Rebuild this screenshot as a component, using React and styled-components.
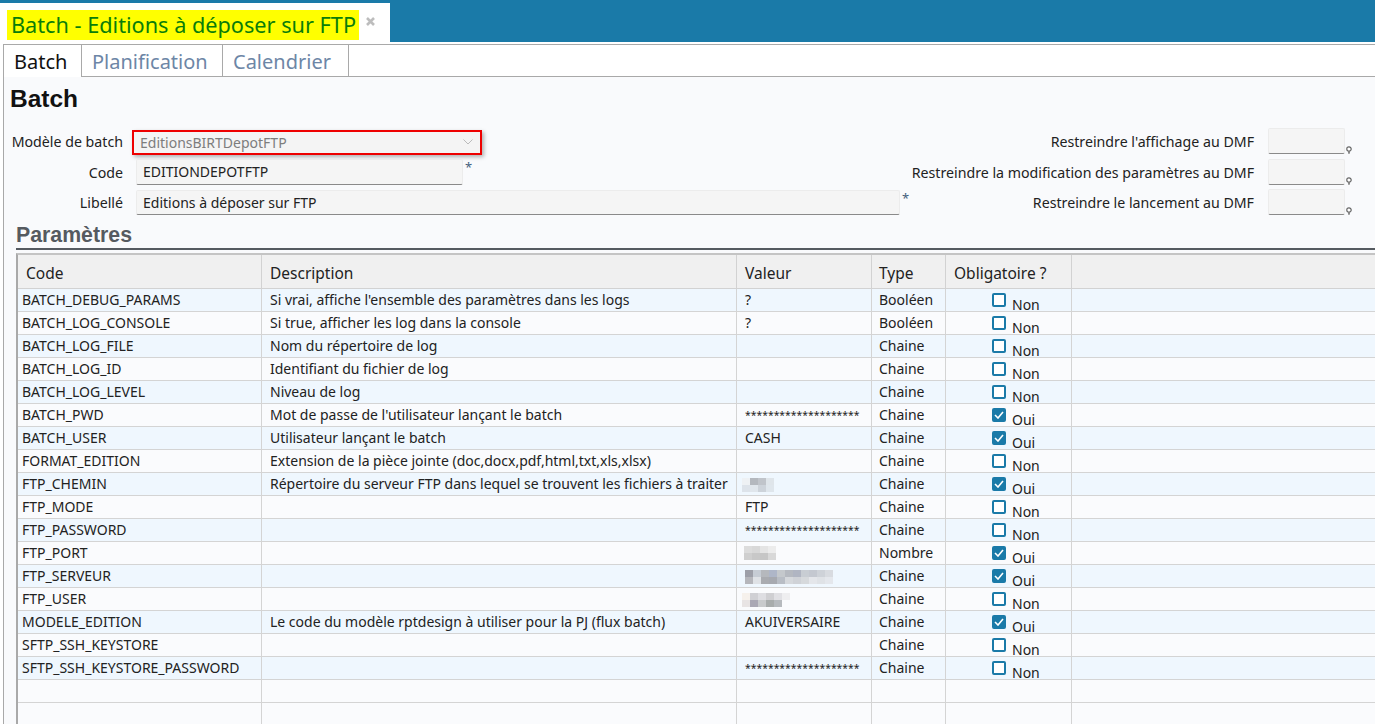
import React from "react";
import styled, { createGlobalStyle } from "styled-components";

const Global = createGlobalStyle`
  html, body { margin: 0; padding: 0; background: #fff; }
  body { font-family: "Noto Sans", "Open Sans", sans-serif; color: #222; }
  * { box-sizing: border-box; }
`;

const Page = styled.div`
  width: 1375px; height: 724px; overflow: hidden; display: flex; flex-direction: column; background: #fff;
`;
const TopBar = styled.div`
  height: 42px; flex: none; background: #1a7aa8; padding-top: 3px; display: flex;
`;
const MainTab = styled.div`
  width: 390px; background: #fff; display: flex; align-items: flex-start; padding: 7px 0 0 7px; gap: 7px;
`;
const MainTitle = styled.span`
  background: #ffff00; color: #0a7d0a; font-size: 21.7px; line-height: 30px; height: 30px; width: 352px; padding-left: 4px; white-space: nowrap;
`;
const Close = styled.svg`
  width: 9px; height: 9px; margin-top: 7px; flex: none;
`;
const Shell = styled.div`
  flex: 1; min-height: 0; margin: 2px 0 0 3px; border-left: 1px solid #a9a9a9; border-top: 1px solid #a9a9a9; display: flex; flex-direction: column;
`;
const TabRow = styled.div`
  display: flex; height: 32px; flex: none; border-bottom: 1px solid #a9a9a9; background: #fff;
`;
const SubTab = styled.div`
  height: ${p => (p.$active ? "32px" : "31px")};
  width: ${p => p.$w}px; padding-left: ${p => p.$pad}px; border-right: 1px solid #a9a9a9; background: #fff;
  color: ${p => (p.$active ? "#111" : "#6d86a6")}; font-size: 20px; line-height: 34px; white-space: nowrap;
`;
const Body = styled.div`
  flex: 1; min-height: 0; background: #f9fafc; padding: 7px 0 0 6px; display: flex; flex-direction: column;
`;
const Heading = styled.h1`
  margin: 0; font: 700 24.5px/30px "Liberation Sans", sans-serif; color: #111;
`;
const Form = styled.div`
  display: flex; justify-content: space-between; margin-top: 14px; height: 87px;
`;
const FormColumn = styled.div`
  display: flex; flex-direction: column; gap: 5px;
`;
const FormRow = styled.div`
  display: flex; align-items: center; justify-content: ${p => (p.$end ? "flex-end" : "flex-start")};
  height: ${p => p.$h || 26}px; margin-top: ${p => p.$mt || 0}px;
`;
const Label = styled.label`
  width: ${p => (p.$w ? `${p.$w}px` : "auto")}; flex: none; text-align: right; font-size: 14.2px; color: #222; white-space: nowrap;
`;
const Select = styled.div`
  width: 350px; height: 25px; margin: 2px 0 0 9px; border: 2px solid #ee0000; background: #f4f4f4; box-shadow: 2px 2px 4px rgba(0,0,0,.3);
  display: flex; align-items: center; justify-content: space-between; padding: 0 7px 0 6px; color: #7d7d7d; font-size: 14px;
`;
const TextInput = styled.div`
  width: ${p => p.$w}px; height: 100%; margin-left: ${p => p.$ml || 13}px; background: #f5f5f5; border: 1px solid #ececec; border-bottom: 1px solid #8a8a8a; border-radius: 2px;
  padding: 0 6px; line-height: 24px; font-size: 14px; color: #222; white-space: nowrap;
`;
const Star = styled.span`
  align-self: flex-start; color: #44607c; font-size: 13px; line-height: 13px; margin-left: 2px; margin-top: 2px;
`;
const Pin = styled.svg`
  width: 6px; height: 8px; align-self: flex-end; margin: 0 23px 0 1px; flex: none;
`;
const SectionTitle = styled.h2`
  margin: 8px 0 0 6px; font: 700 21.3px/24px "Liberation Sans", sans-serif; color: #555a60; height: 25px;
`;
const Rule = styled.div`
  margin-left: 6px; height: 2px; background: #555a60; flex: none;
`;
const TableWrap = styled.div`
  margin: 3px 0 0 6px; flex: 1; min-height: 0; border-left: 2px solid #a9a9a9; border-top: 2px solid #c4c4c4;
`;
const GridRow = styled.div`
  display: grid; grid-template-columns: 244px 475px 135px 74px 126px 1fr; flex: none;
`;
const HeadRow = styled(GridRow)`
  height: 34px; background: #f0f0f0; border-bottom: 1px solid #d2d2d2;
`;
const HeadCell = styled.div`
  border-right: 1px solid #d2d2d2; padding-left: ${p => p.$pad}px; font-size: 15.5px; line-height: 36px; color: #222; white-space: nowrap;
`;
const Row = styled(GridRow)`
  height: 23px; background: ${p => (p.$alt ? "#eff7fe" : "#fafbfd")}; border-bottom: 1px solid #d4d4d4;
`;
const Cell = styled.div`
  border-right: 1px solid #d4d4d4; padding-left: ${p => p.$pad}px; font-size: 14px; line-height: 22px; color: #222; white-space: nowrap; overflow: hidden; position: relative;
`;
const Stars = styled.span`
  font-size: 10.4px; position: relative; top: -1px;
`;
const CheckCell = styled.div`
  border-right: 1px solid #d4d4d4; display: flex; padding-left: 46px; gap: 6px; align-items: flex-start; font-size: 14px; color: #222;
`;
const Box = styled.span`
  width: 14px; height: 14px; margin-top: 4px; border: 2px solid #1a7aa8; border-radius: 2px; flex: none;
  background: ${p => (p.$on ? "#1a7aa8" : "#fff")}; display: flex; align-items: center; justify-content: center;
`;
const BoxLabel = styled.span`
  line-height: 22px; margin-top: 5px; white-space: nowrap;
`;
const Mosaic = styled.div`
  display: grid; grid-template-columns: repeat(${p => p.$cols}, 8px); grid-auto-rows: 7px;
  position: absolute; left: ${p => p.$x}px; top: ${p => p.$y}px;
`;
const Tile = styled.span`
  background: ${p => p.$c};
`;

const mosaics = {
  chemin: { x: 5, y: 5, cols: 4, cells: ["#eef1f4", "#b4b8be", "#c0c4ca", "#dfe5ea", "#dde3ea", "#e0e6ec", "#cdd3da", "#dfe6ec"] },
  port: { x: 7, y: 4, cols: 4, cells: ["#dcdcdc", "#d8d8d8", "#e4e4e4", "#ececec", "#cfcfcf", "#c8c8c8", "#c6c6c6", "#d8d8d8"] },
  serveur: { x: 8, y: 5, cols: 11, cells: ["#9d9fa8", "#c6ccd4", "#b5b8bd", "#aeb6c8", "#c4c8cc", "#b5b9c0", "#b0b5c2", "#c8cdd3", "#c4c8d0", "#ced2d8", "#d8dbe0", "#b5b6bb", "#dfe2e6", "#a9abb0", "#a6a9b0", "#b8bdc5", "#d5d8dc", "#cfd2d7", "#d6d9dc", "#e4e6ea", "#dfe2e6", "#e4e7ec"] },
  user: { x: 5, y: 5, cols: 6, cells: ["#f6f1ec", "#d0d0d4", "#dedee2", "#cfcfd2", "#e0e0e4", "#eeeef0", "#e8e4e4", "#aaa8b4", "#c8cacc", "#a8acac", "#b6babe", "#fafbfd"] },
};

const columnPad = [4, 8, 8, 7, 8];

const rows = [
  ["BATCH_DEBUG_PARAMS", "Si vrai, affiche l'ensemble des paramètres dans les logs", "?", "Booléen", false],
  ["BATCH_LOG_CONSOLE", "Si true, afficher les log dans la console", "?", "Booléen", false],
  ["BATCH_LOG_FILE", "Nom du répertoire de log", "", "Chaine", false],
  ["BATCH_LOG_ID", "Identifiant du fichier de log", "", "Chaine", false],
  ["BATCH_LOG_LEVEL", "Niveau de log", "", "Chaine", false],
  ["BATCH_PWD", "Mot de passe de l'utilisateur lançant le batch", "*", "Chaine", true],
  ["BATCH_USER", "Utilisateur lançant le batch", "CASH", "Chaine", true],
  ["FORMAT_EDITION", "Extension de la pièce jointe (doc,docx,pdf,html,txt,xls,xlsx)", "", "Chaine", false],
  ["FTP_CHEMIN", "Répertoire du serveur FTP dans lequel se trouvent les fichiers à traiter", "#chemin", "Chaine", true],
  ["FTP_MODE", "", "FTP", "Chaine", false],
  ["FTP_PASSWORD", "", "*", "Chaine", false],
  ["FTP_PORT", "", "#port", "Nombre", true],
  ["FTP_SERVEUR", "", "#serveur", "Chaine", true],
  ["FTP_USER", "", "#user", "Chaine", false],
  ["MODELE_EDITION", "Le code du modèle rptdesign à utiliser pour la PJ (flux batch)", "AKUIVERSAIRE", "Chaine", true],
  ["SFTP_SSH_KEYSTORE", "", "", "Chaine", false],
  ["SFTP_SSH_KEYSTORE_PASSWORD", "", "*", "Chaine", false],
];

const PinIcon = () => (
  <Pin viewBox="0 0 6 8">
    <circle cx="3" cy="3" r="2.2" fill="#fff" stroke="#666" strokeWidth="1.2" />
    <path d="M2 5.5h2L3.4 8h-.8z" fill="#666" />
  </Pin>
);

const Value = ({ v }) => {
  if (v === "*") return <Stars>********************</Stars>;
  if (v.startsWith("#")) {
    const m = mosaics[v.slice(1)];
    return (
      <Mosaic $x={m.x} $y={m.y} $cols={m.cols}>
        {m.cells.map((c, i) => <Tile key={i} $c={c} />)}
      </Mosaic>
    );
  }
  return v;
};

const DmfField = ({ label, mt }) => (
  <FormRow $end $mt={mt}>
    <Label>{label}</Label>
    <TextInput $w={77} $ml={14} />
    <PinIcon />
  </FormRow>
);

export default function App() {
  return (
    <Page>
      <Global />
      <TopBar>
        <MainTab>
          <MainTitle>Batch - Editions à déposer sur FTP</MainTitle>
          <Close viewBox="0 0 9 9"><path d="M1 1l7 7M8 1l-7 7" stroke="#bdbdbd" strokeWidth="2.6" /></Close>
        </MainTab>
      </TopBar>
      <Shell>
        <TabRow>
          <SubTab $active $w={78} $pad={10}>Batch</SubTab>
          <SubTab $w={141} $pad={10}>Planification</SubTab>
          <SubTab $w={126} $pad={10}>Calendrier</SubTab>
        </TabRow>
        <Body>
          <Heading>Batch</Heading>
          <Form>
            <FormColumn>
              <FormRow>
                <Label $w={113}>Modèle de batch</Label>
                <Select>
                  <span>EditionsBIRTDepotFTP</span>
                  <svg width="10" height="6" viewBox="0 0 10 6"><path d="M.5.5 5 5 9.5.5" fill="none" stroke="#bbb" /></svg>
                </Select>
              </FormRow>
              <FormRow>
                <Label $w={113}>Code</Label>
                <TextInput $w={327}>EDITIONDEPOTFTP</TextInput>
                <Star>*</Star>
              </FormRow>
              <FormRow $h={25}>
                <Label $w={113}>Libellé</Label>
                <TextInput $w={764}>Editions à déposer sur FTP</TextInput>
                <Star>*</Star>
              </FormRow>
            </FormColumn>
            <FormColumn>
              <DmfField label="Restreindre l'affichage au DMF" />
              <DmfField label="Restreindre la modification des paramètres au DMF" />
              <DmfField label="Restreindre le lancement au DMF" mt={-1} />
            </FormColumn>
          </Form>
          <SectionTitle>Paramètres</SectionTitle>
          <Rule />
          <TableWrap>
            <HeadRow>
              {["Code", "Description", "Valeur", "Type", "Obligatoire ?"].map((h, i) => (
                <HeadCell key={h} $pad={i === 0 ? 8 : columnPad[i]}>{h}</HeadCell>
              ))}
              <div />
            </HeadRow>
            {rows.map((r, i) => (
              <Row key={r[0]} $alt={i % 2 === 0}>
                <Cell $pad={columnPad[0]}>{r[0]}</Cell>
                <Cell $pad={columnPad[1]}>{r[1]}</Cell>
                <Cell $pad={columnPad[2]}><Value v={r[2]} /></Cell>
                <Cell $pad={columnPad[3]}>{r[3]}</Cell>
                <CheckCell>
                  <Box $on={r[4]}>
                    {r[4] && <svg width="10" height="8" viewBox="0 0 10 8"><path d="M1 4l3 3 5-6" fill="none" stroke="#fff" strokeWidth="1.6" /></svg>}
                  </Box>
                  <BoxLabel>{r[4] ? "Oui" : "Non"}</BoxLabel>
                </CheckCell>
                <div />
              </Row>
            ))}
            {[0, 1].map(i => (
              <Row key={i}>
                {columnPad.map((p, j) => <Cell key={j} $pad={p} />)}
                <div />
              </Row>
            ))}
          </TableWrap>
        </Body>
      </Shell>
    </Page>
  );
}
